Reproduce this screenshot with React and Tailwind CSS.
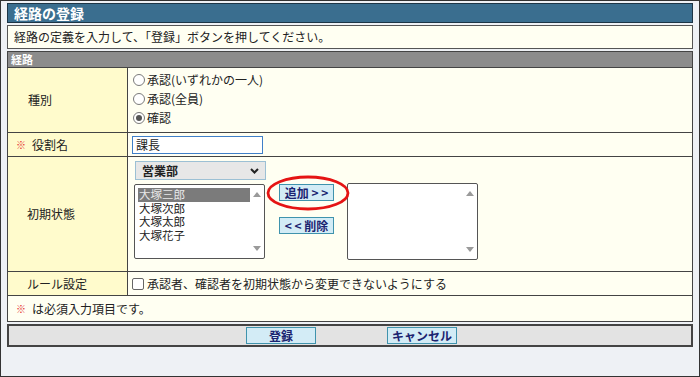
import React from 'react';

const jp = { fontFamily: '"Noto Sans CJK JP", "Noto Sans", sans-serif' };

// Small bits used several times
const Radio = ({ checked, label }) => (
    <div className="flex items-center h-[19px]">
        <span className="w-[12px] h-[12px] rounded-full border border-[#7a7a7a] bg-white flex items-center justify-center mr-[2px]">
            {checked && <span className="w-[6px] h-[6px] rounded-full bg-[#555]" />}
        </span>
        <span>{label}</span>
    </div>
);

const Button = ({ children, className = '' }) => (
    <div className={`h-[17px] bg-[#d3ecf6] border border-[#3f93ad] text-[#1b2470] font-bold text-[12px] leading-[15px] flex items-center justify-center ${className}`}>
        {children}
    </div>
);

const ListBox = ({ items = [], className = '' }) => (
    <div className={`relative border border-[#555] rounded-[2px] bg-white flex ${className}`}>
        <div className="flex-1 pt-[3px] pl-[3px] text-[11.5px]">
            {items.map((it, i) => (
                <div key={it} className={`h-[13.5px] leading-[13.5px] pl-[1px] ${i === 0 ? 'bg-[#7b7b7b] text-[#e8e8e8]' : ''}`}>{it}</div>
            ))}
        </div>
        <div className="w-[14px] flex flex-col justify-between items-center py-[7px] text-[#9a9a9a]">
            <svg width="8" height="5" viewBox="0 0 8 5"><path d="M0 5 L4 0 L8 5Z" fill="currentColor" /></svg>
            <svg width="8" height="5" viewBox="0 0 8 5"><path d="M0 0 L4 5 L8 0Z" fill="currentColor" /></svg>
        </div>
    </div>
);

const Req = () => <span className="text-[#e53030] text-[10px] mr-[6px]">※</span>;

export default function App() {
    const label = 'bg-[#fffbcc] border-r border-[#444] flex items-center';
    const value = 'bg-[#fffff2] flex';

    return (
        <div style={jp} className="w-[700px] h-[377px] bg-[#eef1f5] border border-[#333] px-[6px] pt-[2px] text-[#222] text-[12px] overflow-hidden">
            {/* title */}
            <div className="h-[20px] bg-[#3a6e8f] border border-[#1c3546] text-white font-bold text-[14px] leading-[18px] pl-[6px]">
                経路の登録
            </div>

            {/* instruction */}
            <div className="mt-[2px] h-[24px] bg-[#fffff2] border border-[#555] flex items-center pl-[6px]">
                経路の定義を入力して、「登録」ボタンを押してください。
            </div>

            {/* main table */}
            <div className="mt-[2px] border border-[#444]">
                <div className="h-[16px] bg-[#8c8c8c] text-white font-bold text-[11px] leading-[15px] pl-[3px] border-b border-[#444]">
                    経路
                </div>

                <div className="grid grid-cols-[120px_1fr]">
                    {/* 種別 */}
                    <div className={`${label} h-[65px] pl-[20px] border-b`}>種別</div>
                    <div className={`${value} flex-col h-[65px] pl-[5px] pt-[2px] border-b border-[#444]`}>
                        <Radio label="承認(いずれかの一人)" />
                        <Radio label="承認(全員)" />
                        <Radio checked label="確認" />
                    </div>

                    {/* 役割名 */}
                    <div className={`${label} h-[24px] pl-[8px] border-b`}><Req />役割名</div>
                    <div className={`${value} items-center h-[24px] pl-[4px] border-b border-[#444]`}>
                        <div className="w-[131px] h-[18px] border border-[#3f7fc8] bg-white pl-[3px] leading-[16px]">課長</div>
                    </div>

                    {/* 初期状態 */}
                    <div className={`${label} h-[115px] pl-[19px] border-b`}>初期状態</div>
                    <div className={`${value} relative h-[115px] pl-[7px] pt-[4px] border-b border-[#444]`}>
                        <div className="flex flex-col">
                            <div className="w-[131px] h-[19px] bg-[#e7e7e7] border border-[#9cc0d4] flex items-center justify-between pl-[6px] pr-[6px] font-bold">
                                <span>営業部</span>
                                <svg width="9" height="6" viewBox="0 0 9 6"><path d="M1 1 L4.5 4.5 L8 1" stroke="#222" strokeWidth="2" fill="none" /></svg>
                            </div>
                            <ListBox className="mt-[4px] w-[131px] h-[75px] -ml-[1px]" items={['大塚三郎', '大塚次郎', '大塚太郎', '大塚花子']} />
                        </div>
                        <div className="flex flex-col ml-[13px] pt-[23px] gap-[16px]">
                            <Button className="w-[55px]">追加 &gt; &gt;</Button>
                            <Button className="w-[55px]">&lt; &lt; 削除</Button>
                        </div>
                        <ListBox className="ml-[13px] mt-[22px] w-[131px] h-[77px]" />
                        {/* red annotation ellipse */}
                        <svg className="absolute left-[138px] top-[18px]" width="84" height="36" viewBox="0 0 84 36">
                            <ellipse cx="42" cy="18" rx="40" ry="16" fill="none" stroke="#e51414" strokeWidth="2.8" />
                        </svg>
                    </div>

                    {/* ルール設定 */}
                    <div className={`${label} h-[24px] pl-[19px] border-b`}>ルール設定</div>
                    <div className={`${value} items-center h-[24px] pl-[4px] border-b border-[#444]`}>
                        <span className="w-[12px] h-[12px] border border-[#666] rounded-[2px] bg-white mr-[3px]" />
                        承認者、確認者を初期状態から変更できないようにする
                    </div>
                </div>

                {/* note */}
                <div className="h-[25px] bg-[#fffff2] flex items-center pl-[8px]">
                    <Req />は必須入力項目です。
                </div>
            </div>

            {/* button bar */}
            <div className="mt-[2px] h-[23px] bg-[#e3e3e3] border-2 border-[#444] flex items-center">
                <Button className="w-[70px] ml-[237px]">登録</Button>
                <Button className="w-[70px] ml-[71px]">キャンセル</Button>
            </div>
        </div>
    );
}
